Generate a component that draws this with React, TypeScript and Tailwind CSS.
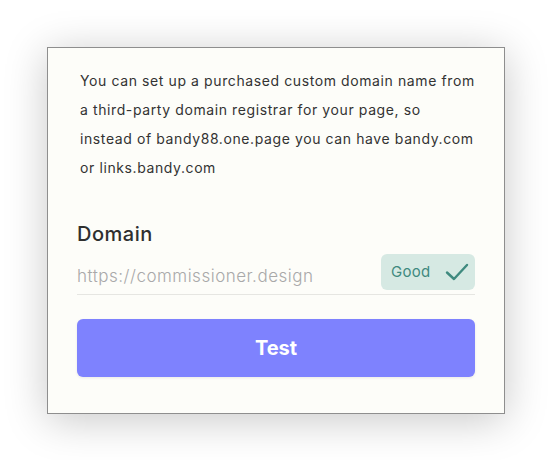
import React from 'react';

const CheckIcon = () => (
  <svg width="24" height="20" viewBox="0 0 24 20" fill="none">
    <path d="M2 10.5 L9 17 L22 3" stroke="#3f8a7f" strokeWidth="2.4" strokeLinecap="round" strokeLinejoin="round" />
  </svg>
);

export default function App() {
  return (
    <div className="w-[551px] h-[460px] bg-white pt-[47px] pl-[47px]" style={{ fontFamily: 'Inter, "Noto Sans", sans-serif' }}>
      <div className="w-[458px] h-[367px] bg-[#fdfdf9] border border-[#8e8e8e] shadow-[0_6px_40px_rgba(0,0,0,0.22)] px-[29px] pt-[18px]">
        {/* intro, wrapped as in the design */}
        <p className="pl-[3px] text-[14px] leading-[29px] text-[#333] tracking-[0.6px] whitespace-nowrap">
          You can set up a purchased custom domain name from
          <br />
          a third-party domain registrar for your page, so
          <br />
          instead of bandy88.one.page you can have bandy.com
          <br />
          or links.bandy.com
        </p>

        <h2 className="mt-[38px] text-[20px] font-medium text-[#2f2f2f] leading-[28px] tracking-[0.5px]">Domain</h2>

        <div className="mt-[6px] flex items-center justify-between border-b border-[#e6e6e2] pb-[4px]">
          <span className="text-[17px] text-[#a9a9a9] font-light tracking-[0.5px] pt-[10px]">https://commissioner.design</span>
          <div className="w-[94px] h-[36px] rounded-[6px] bg-[#d6e9e3] flex items-center pl-[10px] gap-[14px]">
            <span className="text-[15px] text-[#3f8a7f] tracking-[0.3px]">Good</span>
            <CheckIcon />
          </div>
        </div>

        <button className="mt-[24px] w-full h-[58px] rounded-[6px] bg-[#7e82fe] text-white text-[20px] font-bold shadow-[0_1px_3px_rgba(0,0,0,0.08)]">
          Test
        </button>
      </div>
    </div>
  );
}
